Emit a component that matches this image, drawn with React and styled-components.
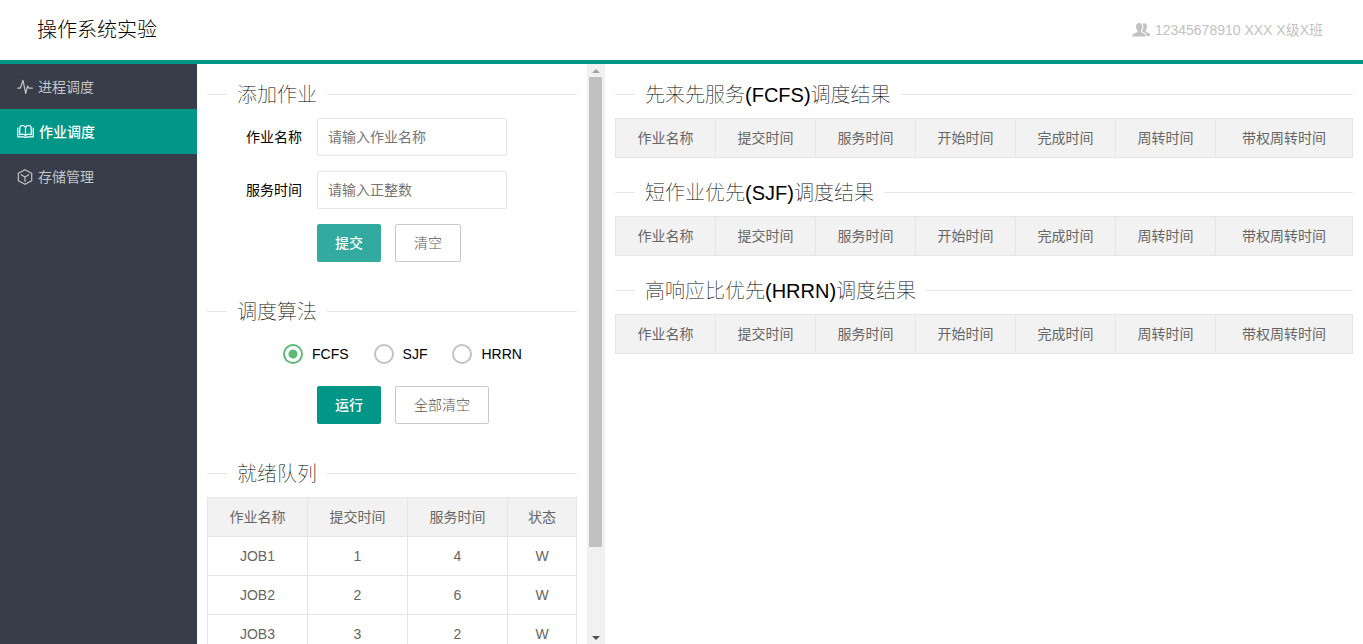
import React, { useEffect, useRef, useState } from "react";
import styled, { createGlobalStyle, css } from "styled-components";

const teal = "#009688";
const line = "#e6e6e6";

const GlobalStyle = createGlobalStyle`
  * { box-sizing: border-box; }
  body {
    margin: 0;
    background: #fff;
    color: #000;
    font: 14px/24px "Liberation Sans", "Noto Sans CJK SC", sans-serif;
  }
  button, input { font: inherit; }
`;

const Page = styled.div`
  display: flex;
  flex-direction: column;
  height: 100vh;
`;

const Header = styled.header`
  display: flex;
  flex: none;
  align-items: center;
  justify-content: space-between;
  height: 64px;
  padding: 0 40px 0 37px;
  border-bottom: 4px solid ${teal};
`;

const Brand = styled.h1`
  margin: 0;
  font-size: 20px;
  line-height: 29px;
  font-weight: 300;
`;

const User = styled.div`
  display: flex;
  align-items: center;
  gap: 4px;
  color: #c2c2c2;
`;

const Body = styled.div`
  display: flex;
  flex: 1;
  min-height: 0;
`;

const Sidebar = styled.nav`
  flex: none;
  width: 197px;
  background: #393d49;
`;

const NavLink = styled.a`
  display: flex;
  align-items: center;
  gap: 5px;
  height: 45px;
  padding: 0 17px;
  text-decoration: none;
  color: ${(p) => (p.$active ? "#fff" : "#c4c5c8")};
  background: ${(p) => (p.$active ? teal : "transparent")};
  font-weight: ${(p) => (p.$active ? 500 : 400)};
`;

const LeftPane = styled.div`
  display: flex;
  flex: none;
  width: 408px;
`;

const Scroller = styled.div`
  flex: 1;
  overflow-y: auto;
  scrollbar-width: none;
`;

const Sections = styled.div`
  display: flex;
  flex-direction: column;
  gap: ${(p) => p.$gap}px;
  padding: 16px 10px;
`;

const RightPane = styled.main`
  flex: 1;
  min-width: 0;
  overflow: auto;
`;

const Title = styled.h2`
  display: flex;
  align-items: center;
  gap: 10px;
  height: 29px;
  margin: 0 0 9px;
  font-size: 20px;
  line-height: 30px;
  font-weight: 100;
  white-space: nowrap;

  &::before, &::after {
    content: "";
    height: 1px;
    background: ${line};
  }
  &::before { width: 20px; }
  &::after { flex: 1; }
`;

const Form = styled.form`
  display: flex;
  flex-direction: column;
  gap: ${(p) => p.$gap}px;
`;

const Field = styled.div`
  display: flex;
  align-items: center;
  height: 38px;
`;

const FieldLabel = styled.label`
  width: 110px;
  padding-right: 15px;
  text-align: right;
`;

const TextInput = styled.input`
  width: 190px;
  height: 38px;
  padding: 0 10px;
  border: 1px solid ${line};
  border-radius: 2px;
  background: #fff;
  outline: none;
  &::placeholder { color: #757575; opacity: 1; }
`;

const Actions = styled.div`
  display: flex;
  gap: 14px;
  padding-left: 110px;
`;

const Button = styled.button`
  height: 38px;
  padding: 0 18px;
  border: 0;
  border-radius: 2px;
  background: ${teal};
  color: #fff;
  font-weight: 500;
  white-space: nowrap;
  cursor: pointer;
  opacity: ${(p) => (p.$soft ? 0.8 : 1)};
  ${(p) =>
    p.$outline &&
    css`
      border: 1px solid #c9c9c9;
      background: #fff;
      color: #555;
      font-weight: 300;
    `}
`;

const RadioGroup = styled.div`
  display: flex;
  align-items: center;
  gap: 25px;
  height: 38px;
  padding-left: 76px;
`;

const RadioLabel = styled.label`
  display: flex;
  align-items: center;
  gap: 9px;
  cursor: pointer;
`;

const Radio = styled.input`
  appearance: none;
  width: 20px;
  height: 20px;
  margin: 0;
  border: 2px solid #c2c2c2;
  border-radius: 50%;
  &:checked {
    border-color: #5fb878;
    background: radial-gradient(circle, #5fb878 4px, transparent 5px);
  }
`;

const Table = styled.table`
  width: 100%;
  table-layout: fixed;
  border-collapse: collapse;
  color: #666;
  text-align: center;

  th, td {
    height: 39px;
    padding: 0;
    border: 1px solid ${line};
    font-weight: 400;
    line-height: 20px;
  }
  th { background: #f2f2f2; width: 100px; }
  th:last-child { width: auto; }
`;

const Bar = styled.div`
  display: flex;
  flex-direction: column;
  flex: none;
  width: 18px;
  background: #f1f1f1;
`;

const Arrow = styled.button`
  display: flex;
  align-items: center;
  justify-content: center;
  flex: none;
  width: 17px;
  height: 13px;
  padding: 0;
  border: 0;
  background: transparent;
`;

const Track = styled.div`
  flex: 1;
  padding: 0 3px 0 2px;
`;

const Thumb = styled.div`
  background: #c1c1c1;
`;

const ActivityIcon = () => (
  <svg width="16" height="16" viewBox="0 0 16 16" fill="none" stroke="currentColor" strokeWidth="1.2" strokeLinejoin="round" strokeLinecap="round" aria-hidden="true">
    <path d="M.7 9.2H3.3L6 1.3 8.7 14.5 10.5 7.2 12 9.2H15.3" />
  </svg>
);

const BookIcon = () => (
  <svg width="17" height="16" viewBox="0 0 17 16" fill="none" stroke="currentColor" strokeWidth="1.2" strokeLinejoin="round" strokeLinecap="round" aria-hidden="true">
    <path d="M8.5 3.600C8 2.200 7 1.500 5.700 1.500 4 1.500 2.800 2.100 2.800 3.600V10.700C4.800 9.800 7.400 10 8.500 11.700 9.600 10 12.200 9.800 14.200 10.700V3.600C14.200 2.100 13 1.500 11.300 1.500 10 1.500 9 2.200 8.500 3.600ZM8.500 3.600V11.700M.8 4V12.800H6.700C7.200 12.800 7.600 13.500 8.500 13.500S9.800 12.800 10.300 12.800H16.200V4" />
  </svg>
);

const CubeIcon = () => (
  <svg width="16" height="16" viewBox="0 0 16 16" fill="none" stroke="currentColor" strokeWidth="1.2" strokeLinejoin="round" strokeLinecap="round" aria-hidden="true">
    <path d="M8 .7 14.7 4.3V11.7L8 15.3 1.3 11.7V4.3ZM4.2 5.700 8 8 11.800 5.700M8 8V12.300" />
  </svg>
);

const UsersIcon = () => (
  <svg width="19" height="16" viewBox="0 0 19 16" fill="currentColor" aria-hidden="true">
    <path d="M7.2 1C9.5 1 10.5 2.7 10.3 5 10.2 6.700 9.500 7.700 8.900 8.500V10L12.500 11.700C13.400 12.200 13.600 13 13.600 14.500H.3C.3 13 .6 12.200 1.500 11.700L5.500 10V8.500C4.900 7.700 4.200 6.700 4.100 5 3.900 2.700 4.900 1 7.200 1Z" />
    <path d="M10.600 1.900C11 1.500 11.500 1.300 12.200 1.300 14.200 1.300 15.100 2.900 14.900 4.900 14.800 6.500 14.200 7.500 13.600 8.200V9.700L17 11.300C17.900 11.800 18.300 12.500 18.300 14H14.500C14.400 12.500 14.200 11.700 13.200 11.100L10 9.500V8.900C11.700 6.900 11.900 4 10.600 1.900Z" />
  </svg>
);

function ScrollPane({ children }) {
  const pane = useRef(null);
  const [view, setView] = useState({ top: 0, size: 100 });

  const measure = () => {
    const el = pane.current;
    setView({
      top: (el.scrollTop / el.scrollHeight) * 100,
      size: (el.clientHeight / el.scrollHeight) * 100,
    });
  };

  useEffect(() => {
    measure();
    window.addEventListener("resize", measure);
    return () => window.removeEventListener("resize", measure);
  }, []);

  const step = (by) => () => pane.current.scrollBy(0, by);

  return (
    <LeftPane>
      <Scroller ref={pane} onScroll={measure}>
        {children}
      </Scroller>
      <Bar>
        <Arrow type="button" aria-label="向上滚动" onClick={step(-40)}>
          <svg width="8" height="4" viewBox="0 0 8 4" aria-hidden="true"><path d="M0 4 4 0 8 4Z" fill="#a3a3a3" /></svg>
        </Arrow>
        <Track>
          <div style={{ height: `${view.top}%` }} />
          <Thumb style={{ height: `${view.size}%` }} />
        </Track>
        <Arrow type="button" aria-label="向下滚动" onClick={step(40)}>
          <svg width="8" height="4" viewBox="0 0 8 4" aria-hidden="true"><path d="M0 0 4 4 8 0Z" fill="#505050" /></svg>
        </Arrow>
      </Bar>
    </LeftPane>
  );
}

function DataTable({ columns, rows = [] }) {
  return (
    <Table>
      <thead>
        <tr>{columns.map((c) => <th key={c} scope="col">{c}</th>)}</tr>
      </thead>
      <tbody>
        {rows.map((r) => (
          <tr key={r[0]}>{r.map((v, i) => <td key={i}>{v}</td>)}</tr>
        ))}
      </tbody>
    </Table>
  );
}

const menu = [
  ["进程调度", ActivityIcon],
  ["作业调度", BookIcon],
  ["存储管理", CubeIcon],
];
const algorithms = ["FCFS", "SJF", "HRRN"];
const queueColumns = ["作业名称", "提交时间", "服务时间", "状态"];
const queue = [
  ["JOB1", 1, 4, "W"],
  ["JOB2", 2, 6, "W"],
  ["JOB3", 3, 2, "W"],
  ["JOB4", 4, 5, "W"],
  ["JOB5", 5, 3, "W"],
];
const resultColumns = ["作业名称", "提交时间", "服务时间", "开始时间", "完成时间", "周转时间", "带权周转时间"];
const results = ["先来先服务(FCFS)调度结果", "短作业优先(SJF)调度结果", "高响应比优先(HRRN)调度结果"];

export default function App() {
  const [algorithm, setAlgorithm] = useState("FCFS");
  return (
    <Page>
      <GlobalStyle />
      <Header>
        <Brand>操作系统实验</Brand>
        <User><UsersIcon /><span>12345678910 XXX X级X班</span></User>
      </Header>
      <Body>
        <Sidebar>
          {menu.map(([name, Icon]) => (
            <NavLink key={name} href="#" $active={name === "作业调度"}>
              <Icon />{name}
            </NavLink>
          ))}
        </Sidebar>
        <ScrollPane>
          <Sections $gap={35}>
            <section>
              <Title>添加作业</Title>
              <Form $gap={15} onSubmit={(e) => e.preventDefault()}>
                <Field>
                  <FieldLabel htmlFor="job-name">作业名称</FieldLabel>
                  <TextInput id="job-name" placeholder="请输入作业名称" />
                </Field>
                <Field>
                  <FieldLabel htmlFor="job-time">服务时间</FieldLabel>
                  <TextInput id="job-time" placeholder="请输入正整数" />
                </Field>
                <Actions>
                  <Button type="submit" $soft>提交</Button>
                  <Button type="reset" $outline>清空</Button>
                </Actions>
              </Form>
            </section>
            <section>
              <Title>调度算法</Title>
              <Form $gap={13} onSubmit={(e) => e.preventDefault()}>
                <RadioGroup role="radiogroup" aria-label="调度算法">
                  {algorithms.map((a) => (
                    <RadioLabel key={a}>
                      <Radio type="radio" name="algorithm" value={a} checked={algorithm === a} onChange={() => setAlgorithm(a)} />
                      {a}
                    </RadioLabel>
                  ))}
                </RadioGroup>
                <Actions>
                  <Button type="submit">运行</Button>
                  <Button type="button" $outline>全部清空</Button>
                </Actions>
              </Form>
            </section>
            <section>
              <Title>就绪队列</Title>
              <DataTable columns={queueColumns} rows={queue} />
            </section>
          </Sections>
        </ScrollPane>
        <RightPane>
          <Sections $gap={20}>
            {results.map((name) => (
              <section key={name}>
                <Title>{name}</Title>
                <DataTable columns={resultColumns} />
              </section>
            ))}
          </Sections>
        </RightPane>
      </Body>
    </Page>
  );
}
